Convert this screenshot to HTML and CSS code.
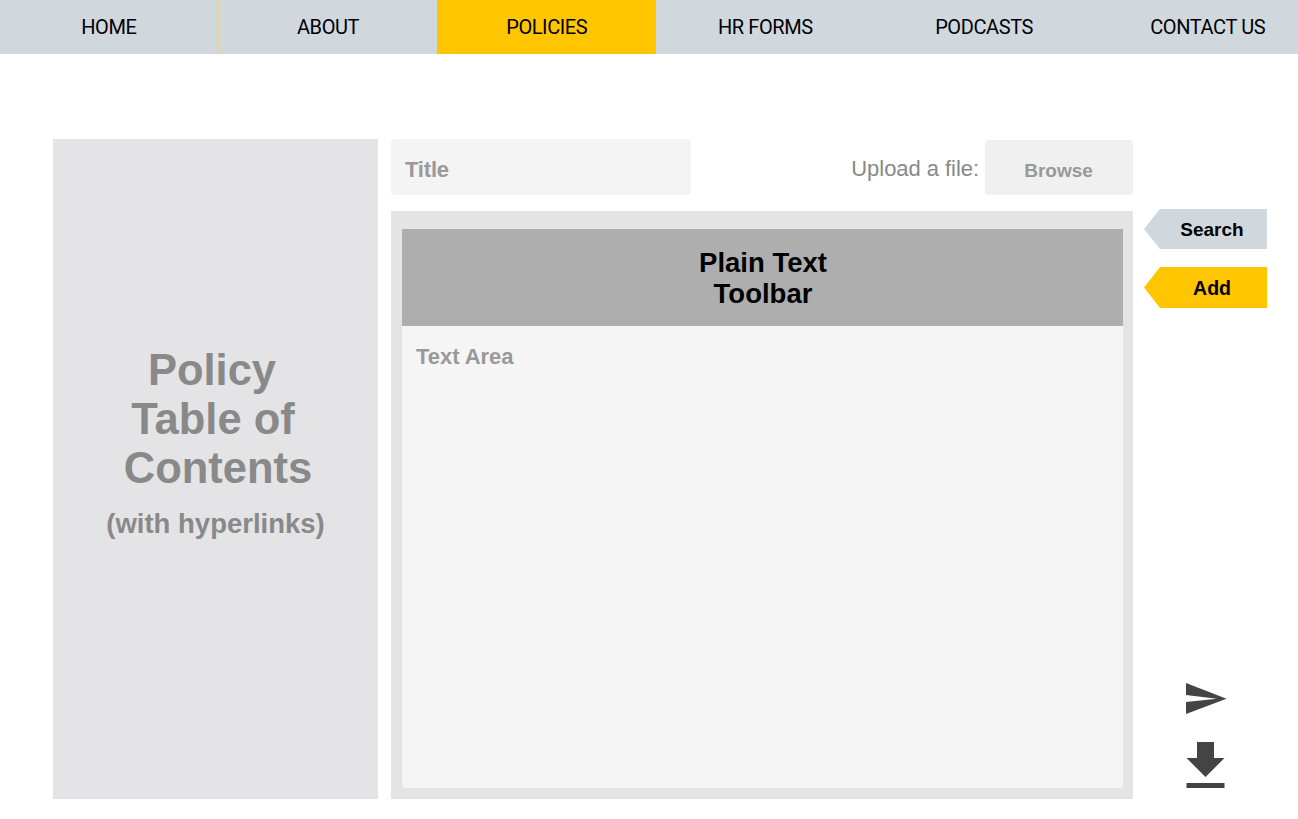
FILE: index.html
```html
<!DOCTYPE html>
<html>
<head>
    <title>Policies</title>
    <link rel="stylesheet" href="styles.css">
</head>

<body>
    <nav class="nav">
        <a class="nav-item nav-home">HOME</a>
        <a class="nav-item">ABOUT</a>
        <a class="nav-item active">POLICIES</a>
        <a class="nav-item">HR FORMS</a>
        <a class="nav-item">PODCASTS</a>
        <a class="nav-item nav-last">CONTACT US</a>
    </nav>

    <div class="page">
        <aside class="toc">
            <div class="toc-line toc-policy">Policy</div>
            <div class="toc-line toc-table">Table of</div>
            <div class="toc-line toc-contents">Contents</div>
            <div class="toc-sub">(with hyperlinks)</div>
        </aside>

        <main class="center">
            <div class="top-row">
                <div class="title-field">Title</div>
                <div class="upload">
                    <span class="upload-label">Upload a file:</span>
                    <button class="browse">Browse</button>
                </div>
            </div>
            <div class="editor">
                <div class="toolbar">Plain Text<br>Toolbar</div>
                <div class="text-area">Text Area</div>
            </div>
        </main>

        <div class="side">
            <div class="tabs">
                <button class="tab tab-search">Search</button>
                <button class="tab tab-add">Add</button>
            </div>
            <div class="icons">
                <svg width="41" height="31" viewBox="0 0 41 31">
                    <path d="M0 0 L40.5 15.7 L0 31 L0 19 L31 15.7 L0 12 Z" fill="#444"/>
                </svg>
                <svg width="39" height="46" viewBox="0 0 39 46">
                    <path d="M11 0 H28 V16 H38.5 L19.5 35 L0.5 16 H11 Z" fill="#444"/>
                    <rect x="0.5" y="41" width="38" height="5" fill="#444"/>
                </svg>
            </div>
        </div>
    </div>
</body>
</html>
```

FILE: styles.css
```css
body {
    margin: 0;
    background-color: #fff;
    font-family: 'Liberation Sans', Arial, sans-serif;
}

button {
    border: none;
    font-family: inherit;
    font-weight: bold;
}

.nav {
    display: grid;
    grid-template-columns: repeat(5, 218.7px) 1fr;
    height: 54px;
    background-color: #d0d8dd;
}

.nav-item {
    display: flex;
    align-items: center;
    justify-content: center;
    font-family: 'Roboto', sans-serif;
    font-size: 20px;
    letter-spacing: -0.4px;
    color: #000;
}

.nav-home {
    border-right: 1px solid #e6d48a;
}

.nav-last {
    padding-left: 24px;
}

.active {
    background-color: #ffc600;
}

.page {
    display: flex;
    padding: 85px 31px 20px 53px;
}

.toc {
    width: 325px;
    height: 660px;
    box-sizing: border-box;
    padding-top: 207px;
    background-color: #e4e4e6;
    color: #898989;
    font-weight: bold;
    text-align: center;
}

.toc-line {
    font-size: 43.5px;
    line-height: 49px;
}

.toc-policy {
    padding-right: 7px;
}

.toc-table {
    padding-right: 5px;
}

.toc-contents {
    padding-left: 5px;
}

.toc-sub {
    margin-top: 15px;
    font-size: 27.5px;
    line-height: 32px;
}

.center {
    width: 742px;
    margin-left: 13px;
}

.top-row {
    display: flex;
    justify-content: space-between;
    height: 56px;
    margin-bottom: 16px;
}

.title-field {
    width: 300px;
    box-sizing: border-box;
    padding: 18px 14px 0;
    border-radius: 4px;
    background-color: #f4f4f4;
    color: #999;
    font-size: 22px;
    font-weight: bold;
    letter-spacing: -0.2px;
    line-height: 26px;
}

.upload {
    display: flex;
    align-items: flex-end;
}

.upload-label {
    margin-right: 6px;
    padding-bottom: 11px;
    color: #898989;
    font-size: 22px;
    letter-spacing: -0.05px;
    line-height: 30px;
}

.browse {
    width: 148px;
    height: 55px;
    padding: 6px 1px 0 0;
    border-radius: 4px;
    background-color: #f0f0f0;
    color: #999;
    font-size: 19px;
}

.editor {
    height: 588px;
    box-sizing: border-box;
    padding: 18px 10px 11px 11px;
    background-color: #e4e4e6;
    display: flex;
    flex-direction: column;
}

.toolbar {
    height: 97px;
    box-sizing: border-box;
    padding: 18px 0 0 1px;
    background-color: #aeaeae;
    color: #000;
    font-size: 27.5px;
    font-weight: bold;
    line-height: 31px;
    text-align: center;
}

.text-area {
    flex: 1;
    padding: 18px 14px;
    border-radius: 0 0 4px 4px;
    background-color: #f5f5f5;
    color: #999;
    font-size: 22px;
    font-weight: bold;
    letter-spacing: -0.05px;
    line-height: 26px;
}

.side {
    width: 123px;
    margin-left: 11px;
    display: flex;
    flex-direction: column;
    justify-content: space-between;
}

.tabs {
    display: flex;
    flex-direction: column;
    gap: 18px;
    margin-top: 70px;
}

.tab {
    height: 40px;
    padding: 1px 0 0 13px;
    color: #000;
    font-size: 19px;
    clip-path: polygon(16px 0, 100% 0, 100% 100%, 16px 100%, 0 50%);
}

.tab-search {
    background-color: #d0d8dd;
}

.tab-add {
    height: 41px;
    padding-top: 2px;
    font-size: 19.5px;
    background-color: #ffc600;
}

.icons {
    display: flex;
    flex-direction: column;
    gap: 28px;
    padding: 0 0 11px 42px;
}

.icons svg {
    display: block;
}
```
